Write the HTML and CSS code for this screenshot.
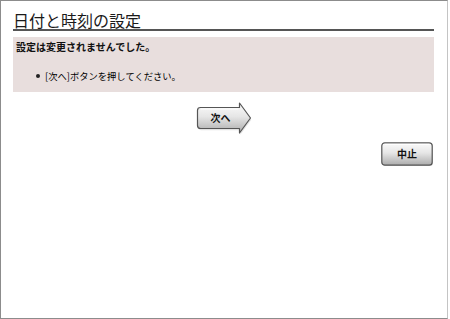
FILE: index.html
```html
<!DOCTYPE html>
<html lang="ja">
<head>
<meta charset="utf-8">
<link rel="stylesheet" href="styles.css">
</head>
<body>
<div class="frame">
  <h1 class="title">日付と時刻の設定</h1>
  <div class="notice">
    <p class="notice-head">設定は変更されませんでした。</p>
    <ul class="notice-list">
      <li class="notice-item"><span class="dot"></span><span>[次へ]ボタンを押してください。</span></li>
    </ul>
  </div>
  <div class="next-row">
    <button class="btn btn-next" type="button">
      <svg class="btn-bg" width="56" height="34" viewBox="0 0 56 34">
        <defs>
          <linearGradient id="g1" x1="0" y1="0" x2="0" y2="1">
            <stop offset="0" stop-color="#fbfbfb"/>
            <stop offset="0.45" stop-color="#e6e6e6"/>
            <stop offset="1" stop-color="#acacac"/>
          </linearGradient>
        </defs>
        <path d="M4.5,7.5 H43.5 V3 L54.5,18 L43.5,33 V28.5 H4.5 Q1.5,28.5 1.5,25.5 V10.5 Q1.5,7.5 4.5,7.5 Z" fill="#d0d0d0" opacity="0.6" transform="translate(0.8,0.8)"/>
        <path d="M4.5,6.5 H43.5 V2 L54.5,17 L43.5,32 V27.5 H4.5 Q1.5,27.5 1.5,24.5 V9.5 Q1.5,6.5 4.5,6.5 Z" fill="url(#g1)" stroke="#555" stroke-width="1.2" stroke-linejoin="round"/>
        <path d="M4.5,8 H42.5" stroke="#ffffff" stroke-width="1"/>
      </svg>
      <span class="btn-label next-label">次へ</span>
    </button>
  </div>
  <div class="stop-row">
    <button class="btn btn-stop" type="button">
      <svg class="btn-bg" width="53" height="25" viewBox="0 0 53 25">
        <defs>
          <linearGradient id="g2" x1="0" y1="0" x2="0" y2="1">
            <stop offset="0" stop-color="#fbfbfb"/>
            <stop offset="0.45" stop-color="#e6e6e6"/>
            <stop offset="1" stop-color="#acacac"/>
          </linearGradient>
        </defs>
        <rect x="1.6" y="1.6" width="50.4" height="22.4" rx="3" fill="#d0d0d0" opacity="0.6"/>
        <rect x="0.8" y="0.8" width="50.4" height="22.4" rx="3" fill="url(#g2)" stroke="#555" stroke-width="1.2"/>
        <path d="M3.5,2.3 H48.5" stroke="#ffffff" stroke-width="1"/>
      </svg>
      <span class="btn-label">中止</span>
    </button>
  </div>
</div>
</body>
</html>
```
FILE: styles.css
```css
html, body {
  margin: 0;
  padding: 0;
  background: #ffffff;
}
body {
  width: 450px;
  height: 319px;
  overflow: hidden;
  font-family: "Noto Sans CJK JP", "Noto Sans", sans-serif;
  color: #111;
}
.frame {
  box-sizing: border-box;
  width: 448px;
  height: 319px;
  border-top: 1px solid #8c8c8c;
  border-left: 1px solid #8c8c8c;
  border-bottom: 1px solid #8c8c8c;
  border-right: 1px solid #c4c4c4;
  padding: 11px 13px 0 12px;
}
.title {
  margin: 0;
  font-size: 16px;
  font-weight: normal;
  line-height: 17px;
  height: 17px;
  border-bottom: 2px solid #555;
  color: #1a1a1a;
}
.notice {
  margin-top: 6px;
  height: 55px;
  box-sizing: border-box;
  background: #e8dedd;
  padding: 4px 3px 0 3px;
}
.notice-head {
  margin: 0;
  font-size: 10px;
  font-weight: bold;
  line-height: 12px;
}
.notice-list {
  list-style: none;
  margin: 17px 0 0 0;
  padding: 0 0 0 20px;
}
.notice-item {
  display: flex;
  align-items: center;
  gap: 5px;
  font-size: 9.3px;
  line-height: 12px;
  color: #000;
}
.dot {
  width: 4px;
  height: 4px;
  border-radius: 50%;
  background: #222;
}
.next-row {
  display: flex;
  justify-content: center;
  margin-top: 9px;
  padding-left: 0;
}
.stop-row {
  display: flex;
  justify-content: flex-end;
  margin-top: 7px;
  padding-right: 0;
}
.btn {
  display: inline-grid;
  padding: 0;
  margin: 0;
  border: none;
  background: none;
  font-family: "Noto Sans CJK JP", sans-serif;
  cursor: pointer;
}
.btn-bg, .btn-label {
  grid-area: 1 / 1;
}
.btn-bg {
  display: block;
}
.btn-label {
  align-self: center;
  justify-self: center;
  font-size: 10px;
  font-weight: bold;
  line-height: 12px;
  color: #111;
}
.btn-stop .btn-label {
  margin: 0 1px 1px 0;
}
.next-label {
  justify-self: start;
  margin-left: 15px;
}
```
